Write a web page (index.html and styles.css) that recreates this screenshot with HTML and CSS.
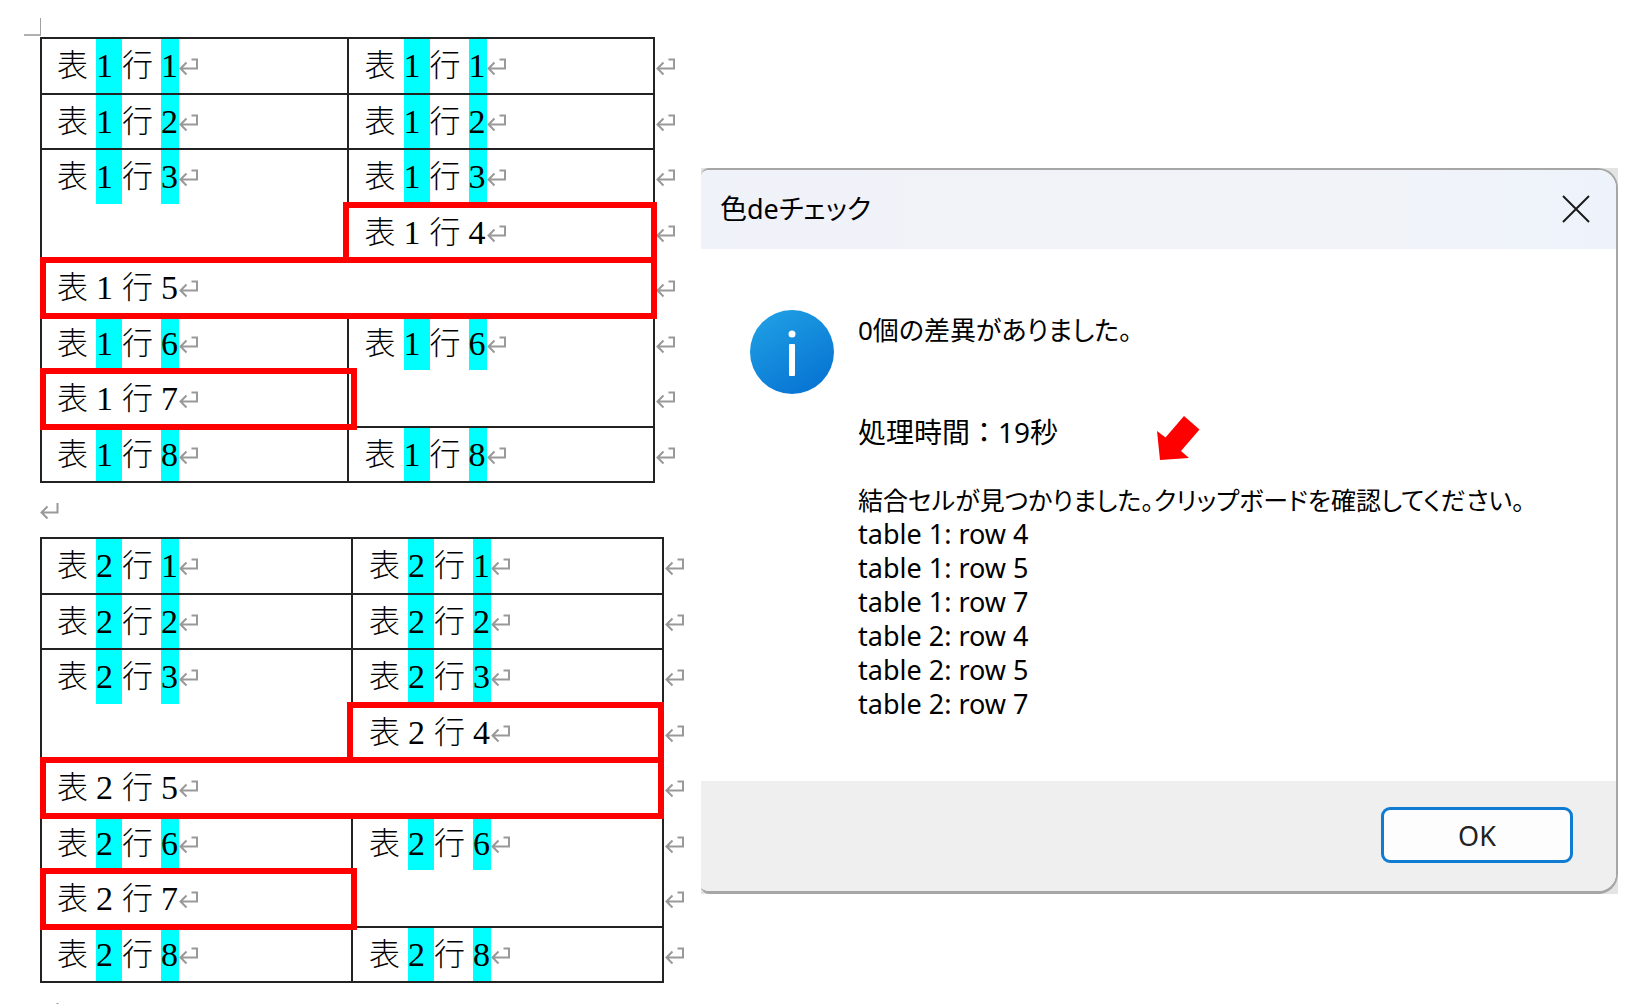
FILE: index.html
```
<!DOCTYPE html>
<html lang="ja">
<head>
    <meta charset="UTF-8">
    <meta name="viewport" content="width=device-width, initial-scale=1.0">
    <title>色deチェック</title>
    <link rel="stylesheet" href="styles.css">
</head>
<body>
    <svg class="sprite" aria-hidden="true">
        <symbol id="cell-mark" viewBox="0 0 20 20">
            <path d="M12.500 3.500H18v9H2M7.500 6.500L1.500 12.500L7.500 18.500"/>
        </symbol>
        <symbol id="para-mark" viewBox="0 0 20 20">
            <path d="M17.500 3v9.500H2M7.500 6.500L1.500 12.500L7.500 18.500"/>
        </symbol>
    </svg>

    <main class="page">
        <section class="document">
            <div class="corner"></div>
            <table class="sheet" id="table1"></table>
            <p class="paragraph"><svg class="mark"><use href="#para-mark"/></svg></p>
            <table class="sheet wide" id="table2"></table>
            <p class="paragraph"><svg class="mark"><use href="#para-mark"/></svg></p>
        </section>

        <section class="backdrop">
            <div class="dialog" role="dialog" aria-labelledby="dialogTitle">
                <header class="titlebar">
                    <h1 id="dialogTitle">色deチェック</h1>
                    <button class="close" type="button" aria-label="閉じる">
                        <svg viewBox="0 0 28 28"><path d="M1 1L27 27M27 1L1 27"/></svg>
                    </button>
                </header>
                <div class="content">
                    <svg class="info" viewBox="0 0 84 84">
                        <defs>
                            <linearGradient id="blue" x1="0.2" y1="0" x2="0.8" y2="1">
                                <stop offset="0" stop-color="#1f9fe4"/>
                                <stop offset="1" stop-color="#0672d2"/>
                            </linearGradient>
                        </defs>
                        <circle cx="42" cy="42" r="42" fill="url(#blue)"/>
                        <circle cx="42" cy="24" r="3.500" fill="#fff"/>
                        <rect x="39" y="34" width="6" height="32" rx="1" fill="#fff"/>
                    </svg>
                    <div class="message">
                        <p class="result">0個の差異がありました。</p>
                        <p class="time">処理時間：19秒</p>
                        <p class="notice">結合セルが見つかりました。クリップボードを確認してください。</p>
                        <ul>
                            <li>table 1: row 4</li>
                            <li>table 1: row 5</li>
                            <li>table 1: row 7</li>
                            <li>table 2: row 4</li>
                            <li>table 2: row 5</li>
                            <li>table 2: row 7</li>
                        </ul>
                    </div>
                    <svg class="pointer" viewBox="0 0 43 45">
                        <path d="M27 0L42.500 13.500L24 35L32 42L3 44L0 15L8.500 21.500Z" fill="#f00"/>
                    </svg>
                </div>
                <footer class="actions">
                    <button class="ok" type="button">OK</button>
                </footer>
            </div>
        </section>
    </main>

    <script>
        const mark = '<svg class="mark"><use href="#cell-mark"/></svg>';

        // One line of text: both numbers are highlighted when the row was compared
        function line(table, row, plain) {
            const tag = plain ? 'span' : 'mark';
            return `<div class="line"><span class="kanji">表</span><${tag} class="num first">${table}</${tag}>` +
                `<span class="kanji">行</span><${tag} class="num last">${row}</${tag}>${mark}</div>`;
        }

        function build(n) {
            const end = `<td class="end">${mark}</td></tr>`;
            const both = row => `<tr><td>${line(n, row)}</td><td>${line(n, row)}</td>${end}`;
            return '<colgroup><col class="text"><col class="text"><col class="tail"></colgroup><tbody>' +
                both(1) + both(2) +
                `<tr><td rowspan="2">${line(n, 3)}</td><td>${line(n, 3)}</td>${end}` +
                `<tr><td class="ring right">${line(n, 4, true)}</td>${end}` +
                `<tr><td class="ring full" colspan="2">${line(n, 5, true)}</td>${end}` +
                `<tr><td>${line(n, 6)}</td><td rowspan="2">${line(n, 6)}</td>${end}` +
                `<tr><td class="ring left">${line(n, 7, true)}</td>${end}` +
                both(8) + '</tbody>';
        }

        document.getElementById('table1').innerHTML = build(1);
        document.getElementById('table2').innerHTML = build(2);
    </script>
</body>
</html>
```
FILE: styles.css
```
* {
    box-sizing: border-box;
}

body {
    margin: 0;
    height: 100vh;
    overflow: hidden;
    background: #fff;
    color: #000;
    font-family: "Noto Sans", "Noto Sans CJK JP", sans-serif;
}

h1, p, ul {
    margin: 0;
    padding: 0;
    font-weight: normal;
}

.sprite {
    position: absolute;
    width: 0;
    height: 0;
}

.page {
    display: flex;
    align-items: flex-start;
    padding: 18px 13px 0 24px;
}

/* Document */
.document {
    flex: 0 0 677px;
    padding-left: 16px;
}

.corner {
    width: 17px;
    height: 18px;
    margin: 0 0 1px -16px;
    border-right: 1px solid #a0a0a0;
    border-bottom: 2px solid #b0b0b0;
}

.sheet {
    width: 637px;
    border-collapse: collapse;
    table-layout: fixed;
}

.sheet.wide {
    width: 646px;
}

.tail {
    width: 22px;
}

.sheet tr {
    height: 56px;
}

.sheet tr:nth-child(even) {
    height: 55px;
}

.sheet td {
    position: relative;
    padding: 0 0 0 15px;
    border: 2px solid #222;
    vertical-align: top;
}

.sheet td + td:not(.end),
.sheet .right {
    padding-left: 16px;
}

.sheet td.end {
    padding: 0 0 0 1px;
    border: 0;
    vertical-align: middle;
}

.line {
    display: flex;
    align-items: center;
    height: 54px;
    font-family: "Liberation Serif", "Noto Sans CJK JP", serif;
    line-height: 54px;
}

.sheet tr:nth-child(even) .line {
    height: 53px;
}

.kanji {
    width: 32px;
    font-size: 31px;
    font-weight: 300;
}

.num {
    height: 100%;
    background: none;
    color: #000;
    font-size: 34px;
}

mark.num {
    background: #0ff;
}

.first {
    width: 26px;
    margin-left: 7px;
}

.last {
    width: 18px;
    margin-left: 7px;
}

.mark {
    display: block;
    width: 20px;
    height: 20px;
    fill: none;
    stroke: #999;
    stroke-width: 2;
}

.paragraph {
    display: flex;
    align-items: center;
    height: 54px;
}

/* Red frames around the merged cells */
.ring::after {
    content: "";
    position: absolute;
    z-index: 1;
    inset: -4px;
    border: 6px solid #f00;
    pointer-events: none;
}

.ring.full::after {
    left: -2px;
}

.ring.left::after {
    left: -2px;
    right: -10px;
}

.ring.right::after {
    left: -6px;
}

.wide .ring::after {
    right: -2px;
}

.wide .ring.left::after {
    right: -6px;
}

/* Message box */
.backdrop {
    flex: 1;
    margin-top: 150px;
    background: #e4e4e4;
}

.dialog {
    overflow: hidden;
    border: solid #a6a6a6;
    border-width: 2px 2px 3px 0;
    border-radius: 8px 20px 20px 8px;
    background: #fff;
    font-size: 27px;
    line-height: 34px;
    font-feature-settings: "palt";
}

.titlebar {
    display: flex;
    align-items: flex-start;
    justify-content: space-between;
    height: 79px;
    padding: 22px 26px 0 19px;
    background: linear-gradient(90deg, #f0f2f9, #f1f3f8 70%, #eef3fb);
}

.titlebar h1 {
    font-size: 27px;
    line-height: 34px;
}

.close {
    width: 28px;
    height: 34px;
    padding: 0;
    border: 0;
    background: none;
}

.close svg {
    display: block;
    width: 28px;
    height: 28px;
    fill: none;
    stroke: #1a1a1a;
    stroke-width: 2;
}

.content {
    position: relative;
    display: flex;
    gap: 24px;
    padding: 61px 24px 60px 49px;
}

.info {
    flex: none;
    width: 84px;
    height: 84px;
}

.message {
    margin-top: 3px;
    white-space: nowrap;
}

.result {
    font-size: 26px;
}

.message .time {
    margin: 68px 0 34px;
    font-size: 28px;
    font-feature-settings: normal;
}

.notice {
    font-size: 25px;
}

.message ul {
    list-style: none;
}

.pointer {
    position: absolute;
    top: 167px;
    left: 456px;
    width: 43px;
    height: 45px;
}

.actions {
    display: flex;
    justify-content: flex-end;
    padding: 26px 43px 28px;
    background: #efefef;
}

.ok {
    width: 192px;
    height: 56px;
    border: 3px solid #0f7bd3;
    border-radius: 9px;
    background: #fdfdfd;
    color: #222;
    font-family: inherit;
    font-size: 27px;
}
```
